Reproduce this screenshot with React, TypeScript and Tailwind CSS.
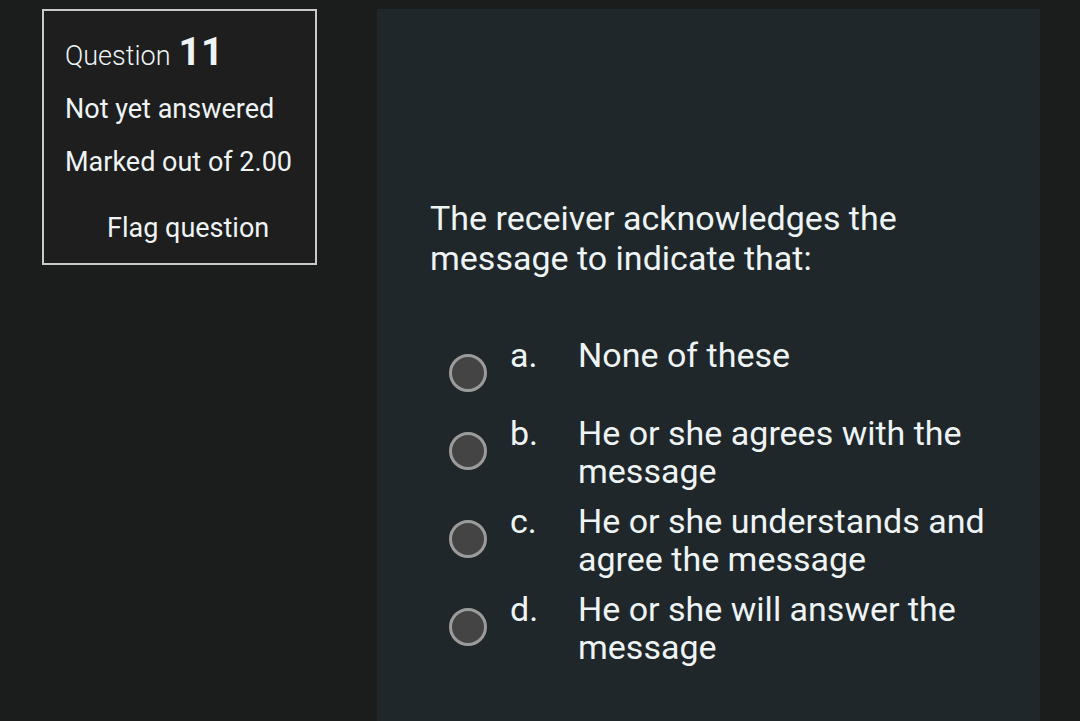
export default function App() {
  const opts = [
    { l: "a.", t: ["None of these"] },
    { l: "b.", t: ["He or she agrees with the", "message"] },
    { l: "c.", t: ["He or she understands and", "agree the message"] },
    { l: "d.", t: ["He or she will answer the", "message"] },
  ];
  return (
    <div
      className="w-[1080px] h-[721px] bg-[#1b1c1c] flex items-start pl-[42px] pt-[9px] gap-[60px] overflow-hidden text-[#eef4f4]"
      style={{ fontFamily: "Roboto, 'Noto Sans', sans-serif" }}
    >
      <div className="w-[275px] h-[256px] shrink-0 border-2 border-[#c9c9c9] bg-[#1e1e1f] pl-[21px] pt-[22px] flex flex-col">
        <div className="flex items-baseline h-[40px]">
          <span className="text-[27px] font-light">Question</span>
          <span className="text-[39px] font-bold ml-[8px] leading-none">11</span>
        </div>
        <div className="text-[27px] mt-[20px] leading-[32px]">Not yet answered</div>
        <div className="text-[27px] mt-[21px] leading-[32px]">Marked out of 2.00</div>
        <div className="text-[27px] mt-[34px] leading-[32px] pl-[42px]">Flag question</div>
      </div>
      <div className="w-[663px] h-[712px] shrink-0 bg-[#20272a] pl-[53px] pt-[189px]">
        <div className="text-[34px] leading-[40px]">
          <div>The receiver acknowledges the</div>
          <div>message to indicate that:</div>
        </div>
        <div className="mt-[58px] flex flex-col gap-[12px]">
          {opts.map((o) => (
            <div key={o.l} className="flex min-h-[66px] text-[34px] leading-[38px]">
              <div className="ml-[19px] mt-[18px] w-[38px] h-[38px] rounded-full border-[3px] border-[#9b9b9b] bg-[#444444] shrink-0" />
              <div className="ml-[23px] w-[68px] shrink-0">{o.l}</div>
              <div>
                {o.t.map((x) => (
                  <div key={x}>{x}</div>
                ))}
              </div>
            </div>
          ))}
        </div>
      </div>
    </div>
  );
}
